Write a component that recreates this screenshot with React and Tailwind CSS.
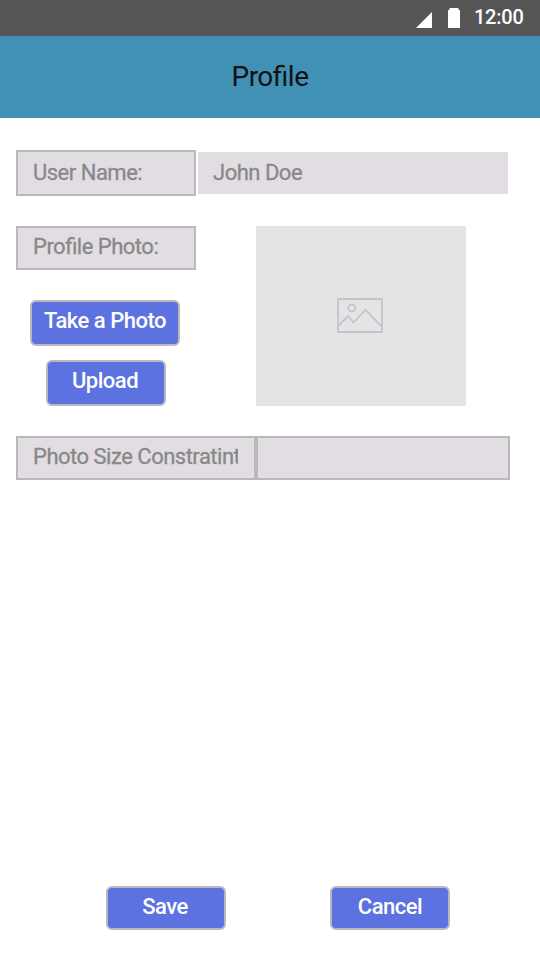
function StatusBar() {
  return (
    <div className="flex h-9 items-start bg-[#555555] text-white">
      <svg className="mt-3 ml-[416px] h-4 w-4 shrink-0" viewBox="0 0 16 16" fill="currentColor">
        <path d="M0 16 16 0v16z" />
      </svg>
      <svg className="mt-2 ml-4 h-5 w-3 shrink-0" viewBox="0 0 12 20" fill="currentColor">
        <path d="M0 2h1.5V0h9v2H12v18H0z" />
      </svg>
      <span className="ml-[14px] pt-[5px] text-[20px] leading-6 font-medium tracking-[-0.25px]">12:00</span>
    </div>
  );
}

function Field({ children, bordered = true, className }) {
  return (
    <div
      className={`shrink-0 bg-[#e2dde3] pr-4 pl-[15px] text-[22px] tracking-[-0.5px] text-[#888888] ${bordered ? "border-2 border-[#b9b9b9]" : ""} ${className}`}
    >
      <div className="overflow-hidden whitespace-nowrap [-webkit-text-stroke:0.3px_#888888]">{children}</div>
    </div>
  );
}

function Button({ children, className }) {
  return (
    <button
      className={`flex shrink-0 justify-center rounded-md border-2 border-[#b9b9b9] bg-[#5b72e0] text-[22px] font-medium tracking-[-0.5px] whitespace-nowrap text-white ${className}`}
    >
      {children}
    </button>
  );
}

function PhotoPlaceholder() {
  return (
    <div className="flex h-[180px] w-[210px] items-center justify-center bg-[#e4e4e4]">
      <svg className="mr-[2px] mb-[2px] h-[36px] w-[46px]" viewBox="0 0 46 36" fill="none" stroke="#c1c4cc" strokeWidth="1.8">
        <path d="M1 2h44v33H1z" />
        <circle cx="14.7" cy="11" r="3.5" />
        <path d="M1.5 28.5 11 19l5.5 6.5L28.5 12.7 45 29.8" />
      </svg>
    </div>
  );
}

export default function App() {
  return (
    <div className="flex h-[960px] w-[540px] flex-col overflow-hidden bg-white font-['Roboto',sans-serif] [font-feature-settings:'liga']">
      <StatusBar />
      <header className="flex h-[82px] items-center justify-center bg-[#4191b6] text-[28px] tracking-[-0.5px] text-[#111111]">
        <h1>Profile</h1>
      </header>
      <main className="flex grow flex-col px-4 pt-8 pb-[30px]">
        <div className="flex items-center gap-[2px]">
          <Field className="h-[46px] w-[180px] leading-[42px]">User Name:</Field>
          <Field bordered={false} className="h-[42px] w-[310px] leading-[42px]">John Doe</Field>
        </div>
        <div className="mt-[30px] flex gap-[60px]">
          <div className="w-[180px]">
            <Field className="h-[44px] w-[180px] leading-[38px]">Profile Photo:</Field>
            <Button className="mt-[30px] ml-[14px] h-[46px] w-[150px] leading-[38px]">Take a Photo</Button>
            <Button className="mt-[14px] ml-[30px] h-[46px] w-[120px] pr-[2px] leading-[38px]">Upload</Button>
          </div>
          <PhotoPlaceholder />
        </div>
        <div className="mt-[30px] flex">
          <Field className="h-[44px] w-[240px] leading-[38px]">Photo Size Constratint</Field>
          <Field className="h-[44px] w-[254px]" />
        </div>
        <div className="mt-auto ml-[90px] flex gap-[104px]">
          <Button className="h-[44px] w-[120px] pr-[2px] leading-[38px]">Save</Button>
          <Button className="h-[44px] w-[120px] leading-[38px]">Cancel</Button>
        </div>
      </main>
    </div>
  );
}
